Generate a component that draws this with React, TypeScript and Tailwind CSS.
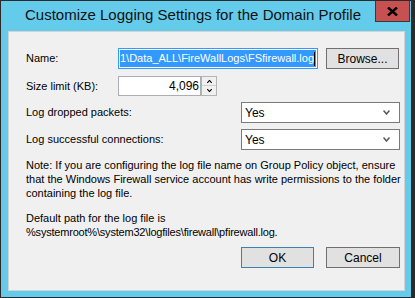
import React from 'react';

const font = { fontFamily: '"Liberation Sans", Arial, sans-serif' };

const Chevron = ({ up = false, className = '' }: { up?: boolean; className?: string }) => (
  <svg width="7" height="5" viewBox="0 0 7 5" className={className}>
    <polyline
      points={up ? '0.5,4.5 3.5,1 6.5,4.5' : '0.5,0.5 3.5,4 6.5,0.5'}
      fill="none"
      stroke="currentColor"
      strokeWidth="1.5"
    />
  </svg>
);

const Select = ({ value }: { value: string }) => (
  <div className="ml-auto w-[159px] h-[21px] border border-[#7a7a7a] bg-white flex items-center pl-[3px] pr-[9px]">
    <span className="text-[12px] text-black">{value}</span>
    <Chevron className="ml-auto text-[#555]" />
  </div>
);

const Button = ({ label, primary = false, width }: { label: string; primary?: boolean; width: string }) => (
  <div
    className={`${width} h-[21px] flex items-center justify-center bg-[#e1e1e1] border text-[12px] text-black ${
      primary ? 'border-[#3c7fb1]' : 'border-[#707070]'
    }`}
  >
    {label}
  </div>
);

export default function App() {
  return (
    <div className="w-[415px] h-[298px] bg-[#2b2b2b] pt-[1px] pl-[1px] overflow-hidden" style={font}>
      <div className="w-[410px] h-[296px] bg-[#65cbea] flex flex-col">
        {/* Title bar */}
        <div className="h-[30px] flex">
          <span className="pl-[24px] pt-[5px] text-[15px] leading-[18px] text-[#111] whitespace-nowrap">
            Customize Logging Settings for the Domain Profile
          </span>
          <div className="ml-auto mr-[1px] w-[35px] h-[21px] bg-[#c75050] border-x border-b border-[#3a3a3a] flex items-center justify-center shrink-0">
            <svg width="11" height="9" viewBox="0 0 11 9">
              <path d="M1 0.5 L10 8.5 M10 0.5 L1 8.5" stroke="#000" strokeWidth="2.4" />
            </svg>
          </div>
        </div>

        {/* Content */}
        <div className="ml-[7px] w-[397px] h-[260px] bg-[#f0f0f0] border border-[#d4d4d4] pl-[17px] pr-[4px] text-[11px] text-black flex flex-col">
          {/* Name */}
          <div className="mt-[16px] h-[21px] flex items-center">
            <span className="w-[92px]">Name:</span>
            <div className="w-[200px] h-[21px] border border-[#3399ff] bg-white p-[1px] flex">
              <div className="flex-1 overflow-hidden flex items-center bg-[#3399ff]">
                <span className="whitespace-nowrap text-white">1\Data_ALL\FireWallLogs\FSfirewall.log</span>
                <span className="w-[1px] h-[14px] bg-black shrink-0" />
              </div>
            </div>
            <div className="ml-[8px]">
              <Button label="Browse..." width="w-[73px]" />
            </div>
          </div>

          {/* Size limit */}
          <div className="mt-[7px] h-[20px] flex items-center">
            <span className="w-[92px]">Size limit (KB):</span>
            <div className="w-[83px] h-[20px] border border-[#abadb3] bg-white flex items-center justify-end pr-[1px] text-[12px]">
              4,096
            </div>
            <div className="w-[16px] h-[20px] border border-[#b4b4b4] flex flex-col">
              <div className="h-[9px] border-b border-[#d0d0d0] bg-[#f0f0f0] flex items-center justify-center">
                <Chevron up className="text-black scale-75" />
              </div>
              <div className="flex-1 bg-[#f0f0f0] flex items-center justify-center">
                <Chevron className="text-black scale-75" />
              </div>
            </div>
          </div>

          {/* Log dropped packets */}
          <div className="mt-[6px] h-[21px] flex items-center">
            <span>Log dropped packets:</span>
            <Select value="Yes" />
          </div>

          {/* Log successful connections */}
          <div className="mt-[6px] h-[21px] flex items-center">
            <span>Log successful connections:</span>
            <Select value="Yes" />
          </div>

          {/* Note */}
          <p className="mt-[8px] leading-[14px] whitespace-nowrap">
            Note: If you are configuring the log file name on Group Policy object, ensure
            <br />
            that the Windows Firewall service account has write permissions to the folder
            <br />
            containing the log file.
          </p>

          <p className="mt-[11px] leading-[14px] whitespace-nowrap">
            Default path for the log file is
            <br />
            <span className="tracking-[-0.2px]">%systemroot%\system32\logfiles\firewall\pfirewall.log.</span>
          </p>

          {/* Buttons */}
          <div className="mt-[8px] flex justify-end gap-[12px]">
            <Button label="OK" primary width="w-[73px]" />
            <Button label="Cancel" width="w-[74px]" />
          </div>
        </div>
      </div>
    </div>
  );
}
